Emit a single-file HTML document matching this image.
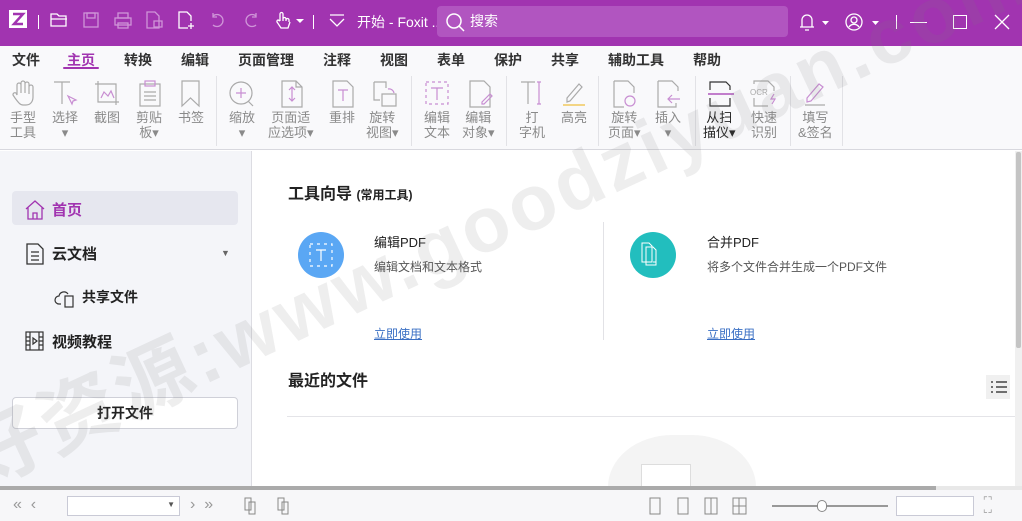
<!DOCTYPE html>
<html style="overflow:hidden;width:1022px;height:521px"><head><meta charset="utf-8"><style>
*{margin:0;padding:0;box-sizing:border-box}
body{width:1022px;height:521px;overflow:hidden;font-family:"Liberation Sans","Noto Sans CJK SC",sans-serif;background:#fff;position:relative;font-size:13px;color:#222}
.abs{position:absolute}
#title{left:0;top:0;width:1022px;height:46px;background:#a134b0}
#search{left:437px;top:6px;width:351px;height:31px;background:#b155c0;border-radius:4px;color:#fff;font-size:14px}
#menu{left:0;top:46px;width:1022px;height:26px;background:#f9f9fb;font-size:14px;font-weight:bold;color:#333}
#menu span{position:absolute;top:4px}
#tb{left:0;top:72px;width:1022px;height:78px;background:#f9f9fb;border-bottom:1px solid #d8d8de}
.t{position:absolute;top:38px;font-size:13px;color:#8a8a8a;text-align:center;line-height:15px}
.sep{position:absolute;top:4px;width:1px;height:70px;background:#e2e2e6}
#left{left:0;top:151px;width:252px;height:336px;background:#f4f5f9;border-right:1px solid #dcdce2}
#bottom{left:0;top:490px;width:1022px;height:31px;background:#f7f7f9}
svg{position:absolute}
</style></head><body>
<div id="title" class="abs">
<svg style="left:9px;top:10px" width="18" height="18"><rect width="18" height="18" fill="#fff"/><path d="M4 4h10L5 14h9" stroke="#a134b0" stroke-width="2.5" fill="none"/></svg>
<div class="abs" style="left:38px;top:15px;width:1px;height:14px;background:#fff"></div>
<svg style="left:50px;top:12px" width="18" height="16" fill="none" stroke="#fff" stroke-width="1.3"><path d="M1 2h6l2 2h7v10H1z M1 7h16"/></svg>
<svg style="left:83px;top:12px" width="16" height="16" fill="none" stroke="#cf95d8" stroke-width="1.3"><rect x="1" y="1" width="14" height="14"/><rect x="4" y="1" width="8" height="5"/></svg>
<svg style="left:114px;top:12px" width="18" height="17" fill="none" stroke="#cf95d8" stroke-width="1.3"><rect x="4" y="1" width="10" height="5"/><rect x="1" y="6" width="16" height="7"/><rect x="4" y="11" width="10" height="5"/></svg>
<svg style="left:146px;top:11px" width="18" height="18" fill="none" stroke="#cf95d8" stroke-width="1.3"><path d="M1 1h8l4 4v12H1z M8 10h8v6H8z"/></svg>
<svg style="left:178px;top:11px" width="18" height="18" fill="none" stroke="#fff" stroke-width="1.3"><path d="M10 17H1V1h8l4 4v5 M13 12v6 M10 15h6"/></svg>
<svg style="left:210px;top:12px" width="16" height="16" fill="none" stroke="#cf95d8" stroke-width="1.3"><path d="M3 4a6 6 0 1 1 0 9 M3 1v4h4"/></svg>
<svg style="left:243px;top:12px" width="16" height="16" fill="none" stroke="#cf95d8" stroke-width="1.3"><path d="M13 4a6 6 0 1 0 0 9 M13 1v4H9"/></svg>
<svg style="left:276px;top:11px" width="30" height="20" fill="none" stroke="#fff" stroke-width="1.3"><path d="M4 10V3a1.5 1.5 0 0 1 3 0v7 M7 8a1.5 1.5 0 0 1 3 0v2 M10 9a1.5 1.5 0 0 1 3 0v2 M4 10 2 9a1.5 1.5 0 0 0-1 2l4 6h7l2-6"/><path d="M20 8h8l-4 4z" fill="#fff" stroke="none"/></svg>
<div class="abs" style="left:313px;top:15px;width:1px;height:14px;background:#fff"></div>
<svg style="left:329px;top:14px" width="16" height="14" fill="none" stroke="#fff" stroke-width="1.3"><path d="M1 1h14 M1 5l7 7 7-7"/></svg>
<div class="abs" style="left:357px;top:12px;color:#fff;font-size:14px">开始 - Foxit ...</div>
<div id="search" class="abs"><svg style="left:8px;top:6px" width="20" height="20" fill="none" stroke="#fff" stroke-width="1.5"><circle cx="9" cy="9" r="7"/><path d="M14 14l5 5"/></svg><span class="abs" style="left:33px;top:5px">搜索</span></div>
<svg style="left:797px;top:12px" width="40" height="20" fill="none" stroke="#fff" stroke-width="1.3"><path d="M3 15h14 M5 15V8a5 5 0 0 1 10 0v7 M8 18h4"/><path d="M25 9h7l-3.5 4z" fill="#fff" stroke="none"/></svg>
<svg style="left:845px;top:12px" width="40" height="20" fill="none" stroke="#fff" stroke-width="1.3"><circle cx="9" cy="10" r="8"/><circle cx="9" cy="8" r="3"/><path d="M4 15a6 6 0 0 1 10 0"/><path d="M27 9h7l-3.5 4z" fill="#fff" stroke="none"/></svg>
<div class="abs" style="left:896px;top:15px;width:1px;height:14px;background:#fff"></div>
<div class="abs" style="left:910px;top:22px;width:17px;height:1px;background:#fff"></div>
<div class="abs" style="left:953px;top:15px;width:14px;height:14px;border:1.3px solid #fff"></div>
<svg style="left:994px;top:14px" width="16" height="16" stroke="#fff" stroke-width="1.3"><path d="M1 1l14 14M15 1 1 15"/></svg>
</div>
<div id="menu" class="abs">
<span style="left:12px">文件</span><span style="left:67px;color:#a134b0">主页</span><span style="left:124px">转换</span><span style="left:181px">编辑</span><span style="left:238px">页面管理</span><span style="left:323px">注释</span><span style="left:380px">视图</span><span style="left:437px">表单</span><span style="left:494px">保护</span><span style="left:551px">共享</span><span style="left:608px">辅助工具</span><span style="left:693px">帮助</span>
<div class="abs" style="left:63px;top:21px;width:36px;height:2px;background:#a134b0;border-radius:1px"></div>
</div>
<div id="tb" class="abs">
<svg style="left:10px;top:8px" width="28" height="28" fill="none" stroke="#aaa" stroke-width="1.2"><path d="M7 15V5a2 2 0 0 1 4 0v8V3a2 2 0 0 1 4 0v10V4a2 2 0 0 1 4 0v10V7a2 2 0 0 1 4 0v10c0 5-3 8-7 8h-3c-3 0-5-3-8-7l-2-3a2 2 0 0 1 3-2z"/></svg>
<svg style="left:52px;top:8px" width="28" height="28" fill="none" stroke="#aaa" stroke-width="1.2"><path d="M2 2h16 M10 2v22"/><path d="M16 16l8 4-3 1-1 3z" stroke="#c88ed2"/></svg>
<svg style="left:94px;top:8px" width="28" height="28" fill="none" stroke="#aaa" stroke-width="1.2"><path d="M4 1v21h21 M1 4h21v21"/><path d="M7 18l3-6 4 4 3-5 3 7" stroke="#c88ed2"/></svg>
<svg style="left:138px;top:8px" width="24" height="28" fill="none" stroke="#aaa" stroke-width="1.2"><rect x="2" y="4" width="20" height="22"/><rect x="7" y="1" width="10" height="5" stroke="#c88ed2"/><path d="M6 12h12M6 16h12M6 20h12"/></svg>
<svg style="left:180px;top:8px" width="22" height="28" fill="none" stroke="#aaa" stroke-width="1.2"><path d="M2 1h17v25l-8.5-8L2 26z"/></svg>
<svg style="left:228px;top:8px" width="28" height="28" fill="none" stroke="#aaa" stroke-width="1.2"><circle cx="13" cy="13" r="11"/><path d="M20 21l5 5"/><path d="M13 8v10M8 13h10" stroke="#c88ed2"/></svg>
<svg style="left:280px;top:8px" width="24" height="28" fill="none" stroke="#aaa" stroke-width="1.2"><path d="M2 1h14l6 6v20H2z M16 1v6h6"/><path d="M12 7v14M9 10l3-3 3 3M9 18l3 3 3-3" stroke="#c88ed2"/></svg>
<svg style="left:331px;top:8px" width="24" height="28" fill="none" stroke="#aaa" stroke-width="1.2"><path d="M2 1h14l6 6v20H2z"/><path d="M7 10h10M12 10v11" stroke="#c88ed2"/></svg>
<svg style="left:372px;top:8px" width="26" height="28" fill="none" stroke="#aaa" stroke-width="1.2"><path d="M2 2h12v6 M2 2v18h6 M10 14h14v12H10z"/><path d="M16 9a5 5 0 0 1 6 4" stroke="#c88ed2"/></svg>
<div class="sep" style="left:216px"></div>
<svg style="left:424px;top:8px" width="26" height="28" fill="none" stroke="#c88ed2" stroke-width="1.2" stroke-dasharray="3 3"><rect x="2" y="2" width="22" height="22"/><path d="M7 8h12M13 8v12" stroke-dasharray="0"/></svg>
<svg style="left:468px;top:8px" width="26" height="28" fill="none" stroke="#aaa" stroke-width="1.2"><path d="M2 1h14l6 6v20H2z"/><path d="M14 22l8-8 2 2-8 8h-2z" stroke="#c88ed2"/></svg>
<div class="sep" style="left:411px"></div>
<svg style="left:519px;top:8px" width="26" height="28" fill="none" stroke="#aaa" stroke-width="1.2"><path d="M2 2h14M9 2v22"/><path d="M20 2v22M18 2h4M18 24h4" stroke="#c88ed2"/></svg>
<svg style="left:561px;top:8px" width="26" height="28" fill="none" stroke="#aaa" stroke-width="1.2"><path d="M6 18l12-14 3 3-12 14-3 1z"/><path d="M2 25h22" stroke="#f3d585" stroke-width="2"/></svg>
<div class="sep" style="left:506px"></div>
<svg style="left:612px;top:8px" width="26" height="28" fill="none" stroke="#aaa" stroke-width="1.2"><path d="M2 1h14l6 6v6 M2 1v26h10"/><circle cx="18" cy="21" r="5" stroke="#c88ed2"/></svg>
<svg style="left:656px;top:8px" width="26" height="28" fill="none" stroke="#aaa" stroke-width="1.2"><path d="M2 1h14l6 6v4 M2 1v26h18v-4"/><path d="M24 19h-12M16 15l-4 4 4 4" stroke="#c88ed2"/></svg>
<div class="sep" style="left:598px"></div>
<svg style="left:708px;top:8px" width="26" height="28" fill="none" stroke="#333" stroke-width="1.2"><path d="M2 10V2h16l4 4v4 M2 18v8h20v-8"/><path d="M0 14h26" stroke="#a134b0"/></svg>
<svg style="left:750px;top:8px" width="30" height="28" fill="none" stroke="#aaa" stroke-width="1.2"><path d="M4 4V1h14l6 6v4 M4 18v8h14"/><text x="0" y="15" font-size="8" fill="#aaa" stroke="none" font-family="Liberation Sans">OCR</text><path d="M24 14l-3 5h4l-3 5" stroke="#c88ed2"/></svg>
<div class="sep" style="left:695px"></div>
<svg style="left:803px;top:8px" width="26" height="28" fill="none" stroke="#c88ed2" stroke-width="1.2"><path d="M4 18l12-14 4 3-12 14-4 1z"/><path d="M2 25h20" stroke="#aaa"/></svg>
<div class="sep" style="left:790px"></div>
<div class="sep" style="left:842px"></div>
<div class="t" style="left:10px">手型<br>工具</div>
<div class="t" style="left:52px">选择<br>▾</div>
<div class="t" style="left:94px">截图</div>
<div class="t" style="left:136px">剪贴<br>板▾</div>
<div class="t" style="left:178px">书签</div>
<div class="t" style="left:229px">缩放<br>▾</div>
<div class="t" style="left:268px">页面适<br>应选项▾</div>
<div class="t" style="left:329px">重排</div>
<div class="t" style="left:366px">旋转<br>视图▾</div>
<div class="t" style="left:424px">编辑<br>文本</div>
<div class="t" style="left:462px">编辑<br>对象▾</div>
<div class="t" style="left:519px">打<br>字机</div>
<div class="t" style="left:561px">高亮</div>
<div class="t" style="left:608px">旋转<br>页面▾</div>
<div class="t" style="left:655px">插入<br>▾</div>
<div class="t" style="left:703px;color:#222">从扫<br>描仪▾</div>
<div class="t" style="left:751px">快速<br>识别</div>
<div class="t" style="left:798px">填写<br>&amp;签名</div>
</div>
<div id="left" class="abs">
<div class="abs" style="left:12px;top:40px;width:226px;height:34px;background:#e6e7ef;border-radius:4px"></div>
<svg style="left:24px;top:48px" width="22" height="22" fill="none" stroke="#a134b0" stroke-width="1.3"><path d="M2 10L11 2l9 8 M4 8v12h14V8 M9 20v-6h4v6"/></svg>
<div class="abs" style="left:52px;top:48px;color:#a134b0;font-size:15px;font-weight:bold">首页</div>
<svg style="left:25px;top:92px" width="20" height="22" fill="none" stroke="#333" stroke-width="1.3"><path d="M2 1h11l5 5v15H2z M6 9h8M6 13h8M6 17h8"/></svg>
<div class="abs" style="left:52px;top:92px;font-size:15px;font-weight:bold">云文档</div>
<div class="abs" style="left:221px;top:97px;font-size:9px;color:#666">▼</div>
<svg style="left:54px;top:137px" width="22" height="20" fill="none" stroke="#333" stroke-width="1.2"><path d="M7 16H5a4 4 0 0 1 0-8 5 5 0 0 1 9-2"/><rect x="11" y="8" width="8" height="11"/></svg>
<div class="abs" style="left:82px;top:136px;font-size:14px;font-weight:bold">共享文件</div>
<svg style="left:25px;top:180px" width="20" height="20" fill="none" stroke="#333" stroke-width="1.2"><rect x="1" y="1" width="17" height="18"/><path d="M5 1v18M14 1v18M1 6h4M1 10h4M1 14h4M14 6h4M14 10h4M14 14h4M8 7l4 3-4 3z"/></svg>
<div class="abs" style="left:52px;top:180px;font-size:15px;font-weight:bold">视频教程</div>
<div class="abs" style="left:12px;top:246px;width:226px;height:32px;background:#fff;border:1px solid #cfd0d8;border-radius:4px;text-align:center;line-height:30px;font-size:14px;font-weight:bold">打开文件</div>
</div>
<div class="abs" style="left:288px;top:180px;font-size:16px;font-weight:bold">工具向导 <span style="font-size:12px">(常用工具)</span></div>
<div class="abs" style="left:298px;top:232px;width:46px;height:46px;border-radius:50%;background:#5aa7f4"></div>
<svg style="left:308px;top:242px" width="26" height="26" fill="none" stroke="#fff" stroke-width="1.2"><rect x="2" y="2" width="22" height="22" stroke-dasharray="3 4"/><path d="M8 8h10M13 8v11"/></svg>
<div class="abs" style="left:374px;top:232px;font-size:13px">编辑PDF</div>
<div class="abs" style="left:374px;top:258px;font-size:12px;color:#555">编辑文档和文本格式</div>
<div class="abs" style="left:374px;top:325px;font-size:12px;color:#3a6fc4;text-decoration:underline">立即使用</div>
<div class="abs" style="left:603px;top:222px;width:1px;height:118px;background:#e2e2e6"></div>
<div class="abs" style="left:630px;top:232px;width:46px;height:46px;border-radius:50%;background:#22bebe"></div>
<svg style="left:638px;top:240px" width="30" height="30" fill="none" stroke="#fff" stroke-width="1"><path d="M4 3h7l3 3v16H4z M8 7h7l3 3v15H8z M10 22h4M18 22h-3"/></svg>
<div class="abs" style="left:707px;top:232px;font-size:13px">合并PDF</div>
<div class="abs" style="left:707px;top:258px;font-size:12px;color:#555">将多个文件合并生成一个PDF文件</div>
<div class="abs" style="left:707px;top:325px;font-size:12px;color:#3a6fc4;text-decoration:underline">立即使用</div>
<div class="abs" style="left:288px;top:367px;font-size:16px;font-weight:bold">最近的文件</div>
<div class="abs" style="left:986px;top:375px;width:24px;height:24px;background:#f0f0f0"></div>
<svg style="left:990px;top:380px" width="18" height="15" stroke="#222" stroke-width="1.3"><path d="M1 2h2M1 7h2M1 12h2M6 2h11M6 7h11M6 12h11"/></svg>
<div class="abs" style="left:287px;top:416px;width:729px;height:1px;background:#e4e4e8"></div>
<div class="abs" style="left:1015px;top:151px;width:7px;height:336px;background:#f0f0f0"></div>
<div class="abs" style="left:1016px;top:152px;width:5px;height:196px;background:#c4c4c4;border-radius:2px"></div>
<div class="abs" style="left:608px;top:435px;width:148px;height:52px;background:#f4f4f4;border-radius:74px 74px 0 0 / 60px 60px 0 0"></div>
<div class="abs" style="left:641px;top:464px;width:50px;height:23px;background:#fff;border:1px solid #ddd;border-bottom:none"></div>
<div class="abs" style="left:0;top:486px;width:1022px;height:4px;background:#aaa"></div>
<div class="abs" style="left:936px;top:486px;width:86px;height:4px;background:#e8e8e8"></div>
<div id="bottom" class="abs">
<div class="abs" style="left:13px;top:6px;color:#999;font-size:16px">«&nbsp; ‹</div>
<div class="abs" style="left:67px;top:6px;width:113px;height:20px;border:1px solid #c9cad6;background:#fff"><span class="abs" style="right:4px;top:3px;font-size:8px;color:#555">▼</span></div>
<div class="abs" style="left:190px;top:6px;color:#999;font-size:16px">› &nbsp;»</div>
<svg style="left:243px;top:6px" width="50" height="20" fill="none" stroke="#888" stroke-width="1"><path d="M2 2h6v12H2z M6 6h6v12H6z M35 2h6v12h-6z M39 6h6v12h-6z"/></svg>
<svg style="left:648px;top:7px" width="120" height="18" fill="none" stroke="#888" stroke-width="1"><rect x="2" y="1" width="10" height="16"/><rect x="30" y="1" width="10" height="16"/><rect x="57" y="1" width="12" height="16"/><path d="M63 1v16"/><rect x="85" y="1" width="13" height="16"/><path d="M91 1v16M85 9h13"/></svg>
<div class="abs" style="left:772px;top:15px;width:116px;height:2px;background:#999"></div>
<div class="abs" style="left:817px;top:10px;width:10px;height:12px;border:1px solid #888;border-radius:5px;background:#fff"></div>
<div class="abs" style="left:896px;top:6px;width:78px;height:20px;border:1px solid #c9cad6;background:#fff"></div>
<div class="abs" style="left:983px;top:8px;color:#999;font-size:10px;line-height:8px">⌜⌝<br>⌞⌟</div>
</div>
<div class="abs" style="left:0;top:0;width:1022px;height:521px;overflow:hidden;pointer-events:none">
<div class="abs" style="left:-10px;top:410px;height:100px;line-height:100px;width:1300px;transform:rotate(-25deg);transform-origin:0 100%;font-size:78px;font-weight:bold;color:rgba(120,120,120,0.13);white-space:nowrap;letter-spacing:4px">好资源:www.goodziyuan.com</div>
</div>
</body></html>
